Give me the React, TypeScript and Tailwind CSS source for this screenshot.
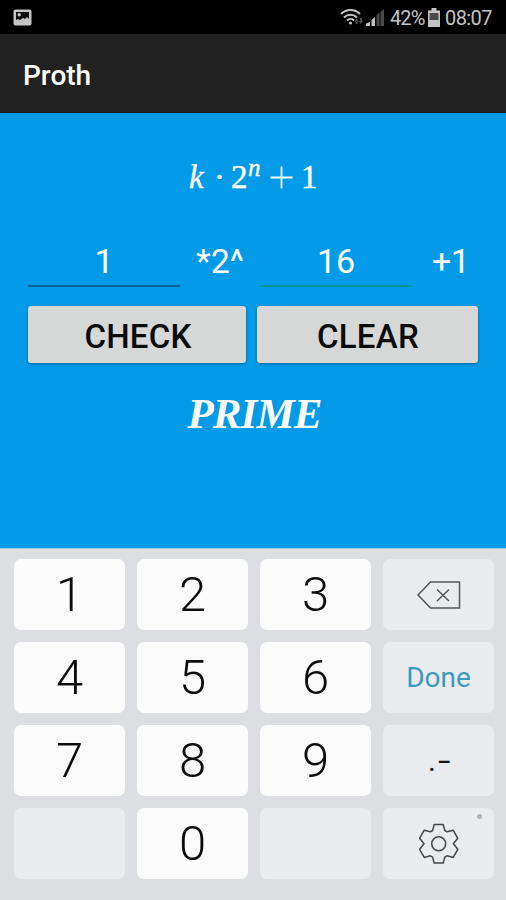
import { useState } from "react"

type KeyItem = {
  id: string
  label?: string
  kind: "digit" | "backspace" | "done" | "symbols" | "blank" | "settings"
}

const keys: KeyItem[] = [
  { id: "1", label: "1", kind: "digit" },
  { id: "2", label: "2", kind: "digit" },
  { id: "3", label: "3", kind: "digit" },
  { id: "backspace", kind: "backspace" },
  { id: "4", label: "4", kind: "digit" },
  { id: "5", label: "5", kind: "digit" },
  { id: "6", label: "6", kind: "digit" },
  { id: "done", label: "Done", kind: "done" },
  { id: "7", label: "7", kind: "digit" },
  { id: "8", label: "8", kind: "digit" },
  { id: "9", label: "9", kind: "digit" },
  { id: "symbols", kind: "symbols" },
  { id: "blank-left", kind: "blank" },
  { id: "0", label: "0", kind: "digit" },
  { id: "blank-right", kind: "blank" },
  { id: "settings", kind: "settings" },
]

function StatusBar() {
  return (
    <div className="flex h-[34px] items-center bg-black pl-[13px] pr-[14px] text-[#c4c4c4]">
      <svg width="19" height="17" viewBox="0 0 19 17">
        <rect x="0.5" y="0.5" width="18" height="16" rx="2" fill="#c4c4c4" />
        <path d="M3 3h13v7l-2-2-2 2-2-1-3 2-2-1-2 1z" fill="#111" />
        <circle cx="6.2" cy="5.8" r="1.7" fill="#c4c4c4" />
      </svg>
      <div className="ml-auto flex items-center">
        <svg width="23" height="18" viewBox="0 0 23 18" fill="none">
          <path d="M1 6c5.300-5.300 13.700-5.300 19 0M4 9.500c3.700-3.700 9.300-3.700 13 0M7 12.500c2-2 5-2 7 0" stroke="#c4c4c4" strokeWidth="2" />
          <circle cx="10.500" cy="15" r="1.500" fill="#c4c4c4" />
          <path d="M14 13.500l2.500-3 2.500 3h-1.500V16h-2v-2.500zM18.500 13h1.500v-3h2v3h1.500L20.800 16z" fill="#4a4a4a" />
        </svg>
        <svg className="ml-[3px]" width="18" height="19" viewBox="0 0 18 19">
          <path d="M0 18v-2.500L4 14v4z" fill="#c4c4c4" />
          <path d="M5.500 18v-6l3.500-3v9z" fill="#c4c4c4" />
          <path d="M10.500 18V7l3-2.400V18z" fill="#4a4a4a" />
          <path d="M14.500 18V4L18 1v17z" fill="#4a4a4a" />
        </svg>
        <span className="ml-[6px] w-[35px] whitespace-nowrap pt-[2px] text-[20px] leading-[32px] tracking-[-0.9px]">42%</span>
        <svg className="ml-[3px]" width="12" height="19" viewBox="0 0 12 19">
          <path d="M3.500 0h5v2.500H12V19H0V2.500h3.500z" fill="#c4c4c4" />
          <path d="M1.500 5h9v7h-9z" fill="#4a4a4a" />
        </svg>
        <span className="ml-[5px] w-[47px] whitespace-nowrap pt-[2px] text-[20px] leading-[32px] tracking-[-0.6px]">08:07</span>
      </div>
    </div>
  )
}

function Formula() {
  return (
    <div className="mt-[46px] ml-[189px] flex h-[36px] items-baseline font-['Liberation_Serif',serif] text-[33px] leading-[36px] text-white [-webkit-text-stroke:0.4px_white]">
      <span className="w-[25px] italic">k</span>
      <span className="w-[17px]">·</span>
      <span className="w-[17px]">2</span>
      <sup className="top-[-12px] w-[22px] text-[25px] leading-none italic">n</sup>
      <svg className="mr-[8px] self-center" width="23" height="23" viewBox="0 0 23 23">
        <path d="M0.500 11.500h22M11.500 0.500v22" stroke="#fff" strokeWidth="1.800" />
      </svg>
      <span>1</span>
    </div>
  )
}

function BackspaceIcon() {
  return (
    <svg width="44" height="28" viewBox="0 0 44 28" fill="none" stroke="#55575a" strokeWidth="1.500">
      <path d="M1 14L13.500 1H42.500v26H13.500z" />
      <path d="M20 8.500l12 11.500M32 8.500L20 20" />
    </svg>
  )
}

function GearIcon() {
  return (
    <svg width="40" height="42" viewBox="0 0 40 42" fill="none" stroke="#45474a" strokeWidth="1.500" strokeLinejoin="round">
      <path d="M15.200 1.500h9l1.600 6 2.200 1.300 6.200-1.600 4.600 8.100-4.400 5.500 4.400 5.500-4.600 8.100-6.200-1.600-2.200 1.300-1.600 6h-9l-1.600-6-2.200-1.300-6.200 1.600-4.600-8.100 4.400-5.500-4.400-5.500 4.600-8.100 6.200 1.600 2.200-1.300z" />
      <circle cx="19.700" cy="20.800" r="7" />
    </svg>
  )
}

function KeyButton({ item, onPress }: { item: KeyItem; onPress: (item: KeyItem) => void }) {
  const isDigit = item.kind === "digit"

  return (
    <button
      onClick={() => onPress(item)}
      aria-label={item.label ?? item.id}
      className={`relative flex h-[71px] items-center justify-center rounded-[7px] ${isDigit ? "bg-[#fbfbfb]" : "bg-[#e9ebef]"}`}
    >
      {isDigit && <span className="text-[49px] leading-[71px] font-light text-[#0c0c0c]">{item.label}</span>}
      {item.kind === "backspace" && <BackspaceIcon />}
      {item.kind === "done" && <span className="text-[28px] text-[#3d9abb]">{item.label}</span>}
      {item.kind === "symbols" && (
        <span className="flex pr-[1px] text-[30px] leading-[67px] text-[#151515]">
          <span>.</span>
          <span className="ml-[4px] scale-x-150">-</span>
        </span>
      )}
      {item.kind === "settings" && (
        <>
          <GearIcon />
          <span className="absolute top-[6px] right-[12px] size-[5px] rounded-full bg-[#adafb3]" />
        </>
      )}
    </button>
  )
}

export default function App() {
  const [k, setK] = useState("1")
  const [n, setN] = useState("16")
  const [result, setResult] = useState("PRIME")

  // Proth's theorem: N is prime if a^((N-1)/2) = -1 (mod N) for some a
  const check = () => {
    const N = BigInt(k || "0") * 2n ** BigInt(n || "0") + 1n
    const prime = [3n, 5n, 7n, 11n, 13n, 17n].some(a => {
      let base = a % N
      let exp = (N - 1n) / 2n
      let value = 1n
      while (exp > 0n) {
        if (exp & 1n) value = (value * base) % N
        base = (base * base) % N
        exp >>= 1n
      }
      return value === N - 1n
    })
    setResult(prime ? "PRIME" : "COMPOSITE")
  }

  const clear = () => {
    setK("")
    setN("")
    setResult("")
  }

  const handleKey = (item: KeyItem) => {
    if (item.kind === "digit") setN(n + item.label)
    if (item.kind === "backspace") setN(n.slice(0, -1))
    if (item.kind === "done") check()
  }

  return (
    <div className="flex h-[900px] w-[506px] flex-col overflow-hidden bg-[#039be8] font-[Roboto,sans-serif]">
      <StatusBar />

      <header className="flex h-[79px] items-center border-b border-[#171c20] bg-[#212121] pl-[23px] pt-[6px]">
        <h1 className="text-[28px] font-medium text-white">Proth</h1>
      </header>

      <main className="h-[435px] bg-[#039be8] text-white">
        <Formula />

        {/* Inputs */}
        <div className="mt-[43px] flex h-[49px] pl-[28px] text-[34px] leading-[46px]">
          <input
            value={k}
            onChange={e => setK(e.target.value)}
            aria-label="k"
            className="w-[152px] border-b-2 border-[#0b6299] pb-[2px] text-center outline-none"
          />
          <span className="w-[80px] pl-[16px]">*2^</span>
          <input
            value={n}
            onChange={e => setN(e.target.value)}
            aria-label="n"
            className="w-[152px] border-b-2 border-[#079792] pb-[2px] text-center outline-none"
          />
          <span className="pl-[20px] tracking-[-0.5px]">+1</span>
        </div>

        {/* Actions */}
        <div className="mt-[19px] flex gap-[11px] pl-[28px] text-[33px] font-medium text-[#0b0b0b]">
          <button onClick={check} className="h-[57px] w-[218px] rounded-[3px] bg-[#d6d8d7] pt-[4px] pl-[2px] tracking-[0.2px] shadow-[0_1px_3px_rgba(0,0,0,0.35)]">
            CHECK
          </button>
          <button onClick={clear} className="h-[57px] w-[221px] rounded-[3px] bg-[#d6d8d7] pt-[4px] pl-[1px] tracking-[0.3px] shadow-[0_1px_3px_rgba(0,0,0,0.35)]">
            CLEAR
          </button>
        </div>

        <p className="mt-[26px] pl-[3px] text-center font-['Liberation_Serif',serif] text-[43px] leading-[50px] font-bold italic tracking-[-0.9px]">{result}</p>
      </main>

      {/* Number pad */}
      <div className="grid flex-1 grid-cols-[repeat(4,111px)] content-start gap-[12px] border-t border-[#8cc4e4] bg-[#dcdee2] pl-[14px] pt-[10px]">
        {keys.map(item => (
          <KeyButton key={item.id} item={item} onPress={handleKey} />
        ))}
      </div>
    </div>
  )
}
